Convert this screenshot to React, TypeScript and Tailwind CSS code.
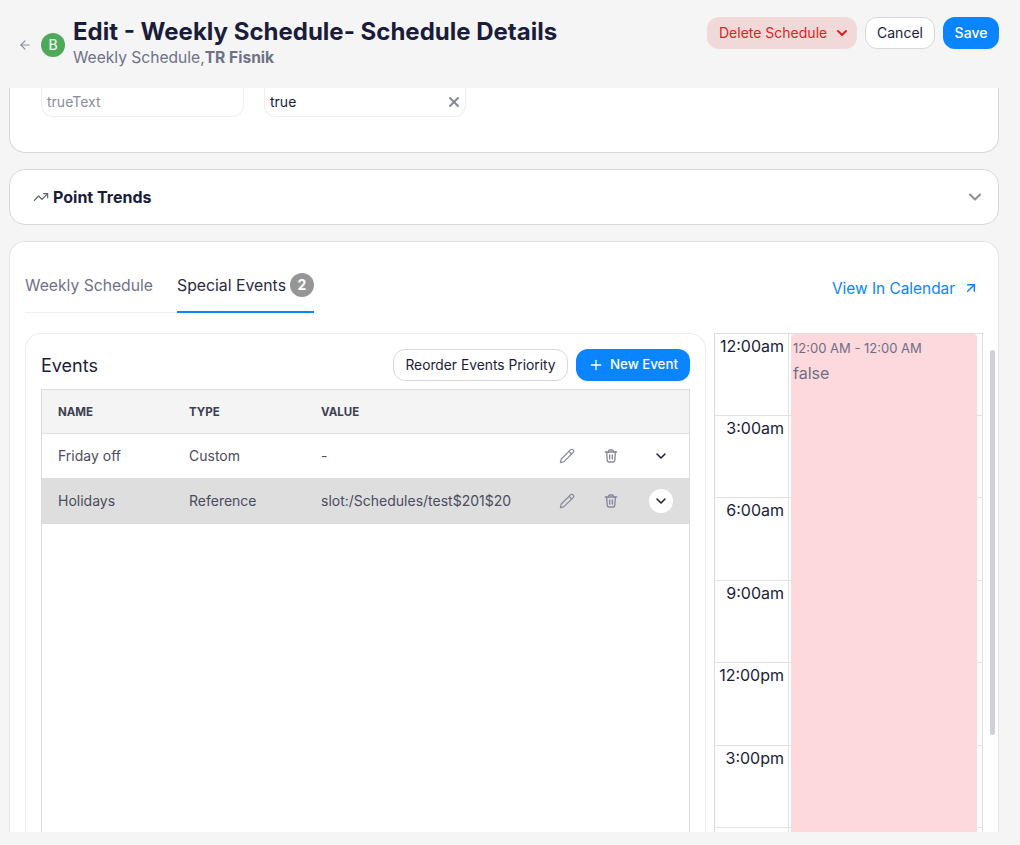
import { ArrowLeft, ArrowUpRight, ChevronDown, Pencil, Plus, TrendingUp, X } from "lucide-react";

const hours = ["12:00am", "3:00am", "6:00am", "9:00am", "12:00pm", "3:00pm", ""];

const events = [
  { name: "Friday off", type: "Custom", value: "-", active: false },
  { name: "Holidays", type: "Reference", value: "slot:/Schedules/test$201$20", active: true },
];

function TrashIcon() {
  return (
    <svg
      viewBox="0 0 24 24"
      fill="none"
      stroke="currentColor"
      strokeWidth="2"
      strokeLinecap="round"
      strokeLinejoin="round"
      className="w-4 h-4 text-[#85889a] ml-7"
    >
      <path d="M3.5 6h17" />
      <path d="M8.5 6V4.5a1.5 1.5 0 0 1 1.5-1.5h4a1.5 1.5 0 0 1 1.5 1.5V6" />
      <path d="M5.5 6l.8 12.5a3 3 0 0 0 3 2.5h5.4a3 3 0 0 0 3-2.5L18.500 6" />
      <path d="M10 10.500v6" />
      <path d="M14 10.500v6" />
    </svg>
  );
}

function Header() {
  return (
    <header className="h-[88px] shrink-0 flex items-start justify-between pl-[18px] pr-[21px]">
      <div className="flex items-center mt-[16px]">
        <ArrowLeft className="w-[14px] h-[14px] text-[#8a8d9c] mt-[6px]" />
        <div className="ml-[9px] mt-[6px] w-6 h-6 rounded-full bg-[#4fa95b] text-[#e9f5ea] text-sm font-medium flex items-center justify-center">
          B
        </div>
        <div className="ml-2">
          <h1 className="text-2xl leading-[32px] font-bold text-[#1a1c3a]">
            Edit - Weekly Schedule- Schedule Details
          </h1>
          <p className="text-[15.6px] leading-[20px] text-[#6f7288]">
            Weekly Schedule,<span className="font-bold">TR Fisnik</span>
          </p>
        </div>
      </div>
      <div className="flex items-center gap-2 mt-[17px]">
        <button className="h-8 w-[150px] rounded-xl bg-[#f2d9d9] text-[#dd2222] text-sm flex items-center pl-[12px] gap-[7px]">
          Delete Schedule
          <ChevronDown className="w-4 h-4" strokeWidth={3} />
        </button>
        <button className="h-8 w-[70px] rounded-xl bg-white border border-[#d8d8d8] text-[#1a1c3a] text-sm">
          Cancel
        </button>
        <button className="h-8 w-14 rounded-xl bg-[#0a84ff] text-white text-sm font-medium">Save</button>
      </div>
    </header>
  );
}

function Calendar() {
  return (
    <div className="w-[269px] relative border-l border-t border-r border-[#dedede] h-[500px]">
      {hours.map((h, i) => (
        <div
          key={h}
          className={
            i === 0
              ? "h-[81.5px] flex border-b border-[#e2e2e2]"
              : "h-[82.6px] flex border-b border-[#e2e2e2]"
          }
        >
          <div className="w-[74px] border-r border-[#dedede] text-right pr-[4px] pt-[2px] text-base leading-[20px] text-[#1a1c3a]">
            {h}
          </div>
        </div>
      ))}
      <div className="absolute left-[76px] top-0 bottom-0 w-[186px] bg-[#fdd8dc] rounded-t-sm px-[2px] pt-[5px] text-[#6f6f86]">
        <p className="text-[13px] leading-[18px]">12:00 AM - 12:00 AM</p>
        <p className="text-base leading-[20px] mt-[6px]">false</p>
      </div>
    </div>
  );
}

function EventsPanel() {
  return (
    <div className="w-[681px] h-[520px] shrink-0 border border-b-0 border-[#ececec] rounded-t-2xl px-[15px] pt-[15px]">
      <div className="flex items-center justify-between h-8">
        <h2 className="text-lg text-[#1a1c3a] mt-[2px]">Events</h2>
        <div className="flex gap-2">
          <button className="h-8 w-[175px] rounded-xl border border-[#d8d8d8] text-[13.8px] text-[#1a1c3a]">
            Reorder Events Priority
          </button>
          <button className="h-8 w-[114px] rounded-xl bg-[#0a84ff] text-white text-[13.3px] font-medium flex items-center pl-[12px] gap-[6px]">
            <Plus className="w-4 h-4" />
            New Event
          </button>
        </div>
      </div>
      <div className="mt-2 w-[649px] h-[460px] border border-b-0 border-[#dcdcdc]">
        <div className="h-[44px] pt-[3px] grid grid-cols-[131px_132px_1fr] pl-[16px] items-center bg-[#f4f4f4] border-b border-[#e0e0e0] text-[11.5px] font-bold text-[#3c3e52]">
          <span>NAME</span>
          <span>TYPE</span>
          <span>VALUE</span>
        </div>
        {events.map((e) => (
          <div
            key={e.name}
            className={
              e.active
                ? "h-[46px] flex items-center pl-[16px] bg-[#dedede] text-sm text-[#4a4c60]"
                : "h-[44px] flex items-center pl-[16px] text-sm text-[#4a4c60]"
            }
          >
            <span className="w-[131px]">{e.name}</span>
            <span className="w-[132px]">{e.type}</span>
            <span className="w-[238px]">{e.value}</span>
            <Pencil className="w-4 h-4 text-[#85889a]" strokeWidth={1.75} />
            <TrashIcon />
            <span
              className={
                e.active
                  ? "ml-[30px] w-6 h-6 rounded-full bg-white flex items-center justify-center text-[#1a1c3a]"
                  : "ml-[30px] w-6 h-6 flex items-center justify-center text-[#1a1c3a]"
              }
            >
              <ChevronDown className="w-4 h-4" strokeWidth={2.25} />
            </span>
          </div>
        ))}
      </div>
    </div>
  );
}

export default function App() {
  return (
    <div className="h-[845px] w-[1020px] overflow-hidden flex flex-col bg-[#f5f5f5] font-['Inter',sans-serif]">
      <Header />
      <main className="h-[744px] shrink-0 overflow-hidden pl-[9px] pr-[21px] flex flex-col gap-4">
        <section className="h-[65px] shrink-0 bg-white border border-t-0 border-[#d8d8d8] rounded-b-2xl flex gap-5 items-start pl-[31px]">
          <div className="w-[203px] h-[29px] border border-t-0 border-[#eeeeee] rounded-b-xl px-[5px] flex items-center text-sm text-[#8a8d9c]">
            trueText
          </div>
          <div className="w-[202px] h-[29px] border border-t-0 border-[#eeeeee] rounded-b-xl pl-[5px] pr-[3px] flex items-center justify-between text-sm text-[#1a1c3a]">
            true
            <X className="w-4 h-4 text-[#85889a]" strokeWidth={3} />
          </div>
        </section>

        <section className="h-[56px] shrink-0 bg-white border border-[#d8d8d8] rounded-2xl flex items-center justify-between pl-[23px] pr-[13px]">
          <div className="flex items-center gap-1">
            <TrendingUp className="w-4 h-4 text-[#5a5c70]" strokeWidth={1.75} />
            <span className="text-base font-bold text-[#1a1c3a]">Point Trends</span>
          </div>
          <ChevronDown className="w-5 h-5 text-[#8f8f8f]" strokeWidth={2.5} />
        </section>

        <section className="h-[600px] shrink-0 bg-white border border-b-0 border-[#e4e4e4] rounded-t-2xl pl-[15px] pt-[23px]">
          <div className="flex items-center justify-between pr-[19px] h-[48px]">
            <div className="flex h-[48px]">
              <div className="w-[152px] h-full border-b border-[#eeeeee] pt-[9px] text-[15.7px] leading-[23px] text-[#6f7288]">
                Weekly Schedule
              </div>
              <div className="h-full border-b-2 border-[#0a84ff] pt-[8px] text-[15.8px] leading-[24px] text-[#2a2c44] flex items-start gap-1">
                <span className="mt-px leading-[23px]">Special Events</span>
                <span className="w-6 h-6 rounded-full bg-[#969696] text-white text-sm font-bold flex items-center justify-center">
                  2
                </span>
              </div>
            </div>
            <div className="flex items-center gap-2 text-[15.4px] text-[#0a84ff] mt-[-1px]">
              View In Calendar
              <ArrowUpRight className="w-4 h-4" strokeWidth={2.25} />
            </div>
          </div>
          <div className="flex gap-2 mt-5">
            <EventsPanel />
            <Calendar />
            <div className="-ml-px mt-[17px] w-[5px] h-[385px] rounded-full bg-[#cfcfd6]" />
          </div>
        </section>
      </main>
    </div>
  );
}
